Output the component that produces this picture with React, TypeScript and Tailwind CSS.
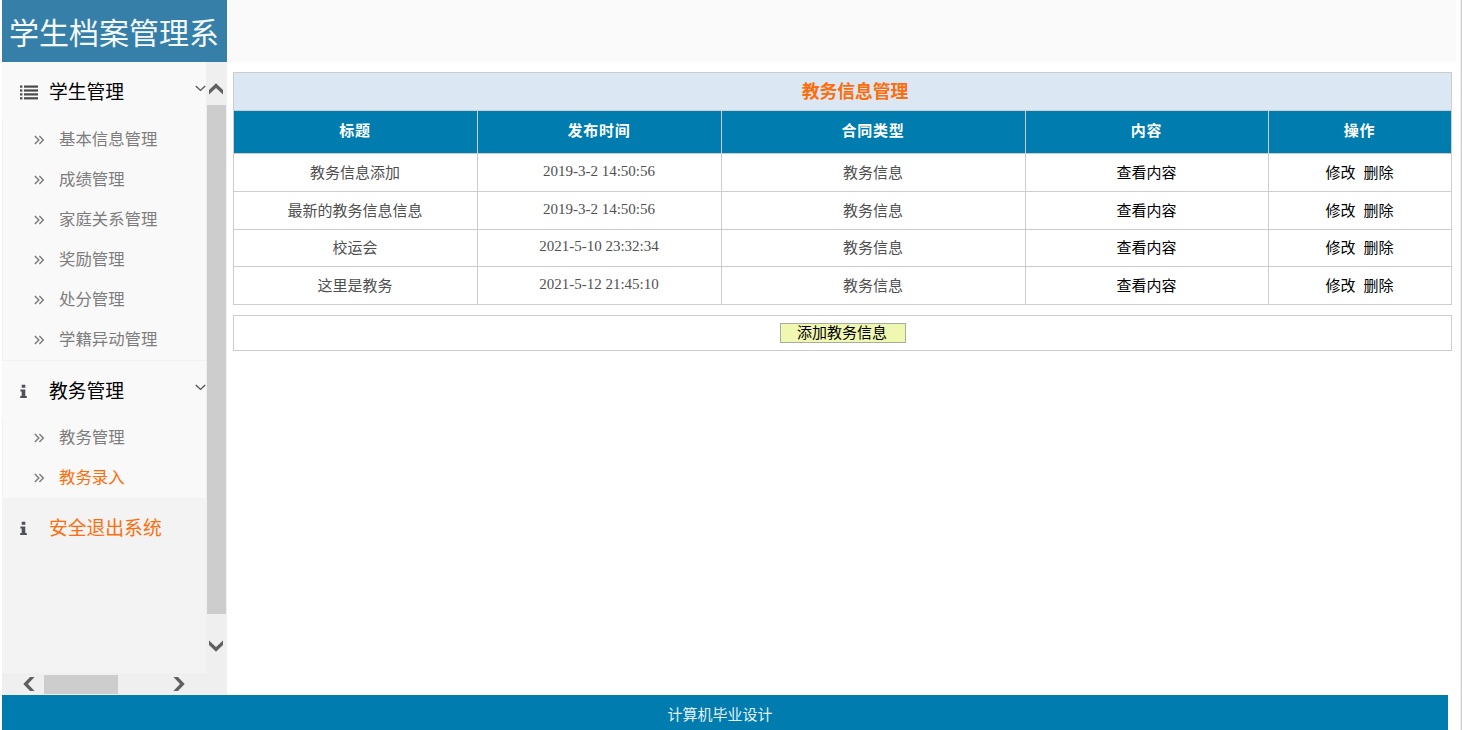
import React from "react";

function ListIcon() {
  return (
    <svg width="18" height="15" viewBox="0 0 18 15" fill="#4a4a4a" className="shrink-0">
      {[0.5, 4.4, 8.3, 12.2].map((y) => (
        <g key={y}>
          <rect x="0" y={y} width="2.4" height="2.2" />
          <rect x="4" y={y} width="14" height="2.2" />
        </g>
      ))}
    </svg>
  );
}

function InfoIcon() {
  return (
    <svg width="7" height="15" viewBox="0 0 7 15" fill="#50505a" className="shrink-0">
      <path d="M1.700.8h3.600v3H1.700zM.4 5.400H5.300v6.500h1.500V14H.2v-2.100h1.500V7.500H.4z" />
    </svg>
  );
}

function DoubleAngle() {
  return (
    <svg width="11" height="10" viewBox="0 0 11 10" fill="none" stroke="#7d7d7d" strokeWidth="1.5" className="shrink-0">
      <path d="M.9 1 4.800 5 .9 9M5.400 1 9.300 5 5.400 9" />
    </svg>
  );
}

function Chevron() {
  return (
    <svg width="11" height="7" viewBox="0 0 11 7" fill="none" stroke="#555" strokeWidth="1.4">
      <path d="M.8.9 5.500 5.400 10.200.9" />
    </svg>
  );
}

const rotations = { up: "", down: "rotate-180", left: "-rotate-90", right: "rotate-90" };

function ScrollArrow({ dir }: { dir: keyof typeof rotations }) {
  return (
    <svg width="14" height="12" viewBox="0 0 14 12" fill="#606060" className={rotations[dir]}>
      <path d="M7 .3 14 7v4.600L7 5 0 11.600V7z" />
    </svg>
  );
}

function MenuHead({ icon, label, open = true }: { icon: React.ReactNode; label: string; open?: boolean }) {
  return (
    <div className="flex h-[60px] items-center pl-[18px]">
      <span className="flex w-[29px]">{icon}</span>
      <span className={open ? "pb-px text-[18.8px] text-black" : "pb-px text-[18.8px] text-[#ff6c0a]"}>{label}</span>
      {open && (
        <span className="mb-[8px] ml-auto">
          <Chevron />
        </span>
      )}
    </div>
  );
}

function SubItem({ label, active = false }: { label: string; active?: boolean }) {
  return (
    <div className="flex h-10 items-center border-l border-[#f0f0f0] pl-[31px]">
      <DoubleAngle />
      <span
        className={
          active
            ? "ml-[14px] pb-[3px] text-[16.4px] text-[#ff6c0a]"
            : "ml-[14px] pb-[3px] text-[16.4px] text-[#7d7d7d]"
        }
      >
        {label}
      </span>
    </div>
  );
}

const studentItems = ["基本信息管理", "成绩管理", "家庭关系管理", "奖励管理", "处分管理", "学籍异动管理"];

function Sidebar() {
  return (
    <aside className="flex w-[225px] shrink-0 flex-col bg-[#efefef]">
      <h1 className="flex h-[62px] shrink-0 items-center overflow-hidden whitespace-nowrap bg-[#367fa9] pb-px pl-[7px] text-[30px] font-normal text-[#f4f9fc]">
        学生档案管理系
      </h1>
      <div className="flex h-[611px]">
        <nav className="w-[204px] whitespace-nowrap bg-[#f3f3f3]">
          <div className="h-[299px] border-b border-[#f2f2f2] bg-[#f9f9f9]">
            <div className="h-[58px]">
              <MenuHead icon={<ListIcon />} label="学生管理" />
            </div>
            {studentItems.map((label) => (
              <SubItem key={label} label={label} />
            ))}
          </div>
          <div className="h-[137px] bg-[#f9f9f9]">
            <div className="h-[57px]">
              <MenuHead icon={<InfoIcon />} label="教务管理" />
            </div>
            <SubItem label="教务管理" />
            <SubItem label="教务录入" active />
          </div>
          <MenuHead icon={<InfoIcon />} label="安全退出系统" open={false} />
        </nav>
        <div className="flex flex-1 flex-col items-center">
          <span className="flex h-[43px] items-end pb-[10px] pr-px">
            <ScrollArrow dir="up" />
          </span>
          <span className="h-[509px] w-[19px] bg-[#cdcdcd]" />
          <span className="mt-[26px] pr-px">
            <ScrollArrow dir="down" />
          </span>
        </div>
      </div>
      <div className="flex h-[22px] items-center pl-[20px]">
        <ScrollArrow dir="left" />
        <span className="ml-[8px] h-[19px] w-[74px] bg-[#cdcdcd]" />
        <span className="ml-[54px]">
          <ScrollArrow dir="right" />
        </span>
      </div>
    </aside>
  );
}

const headers = ["标题", "发布时间", "合同类型", "内容", "操作"];
const rows = [
  { title: "教务信息添加", time: "2019-3-2 14:50:56", height: "h-[38px]" },
  { title: "最新的教务信息信息", time: "2019-3-2 14:50:56", height: "h-[38px]" },
  { title: "校运会", time: "2021-5-10 23:32:34", height: "h-[37px]" },
  { title: "这里是教务", time: "2021-5-12 21:45:10", height: "h-[38px]" },
];
const columns = "grid grid-cols-[244px_244px_304px_243px_182px] border-t border-[#cdcdcd]";
const cell = "flex items-center justify-center border-r border-[#cdcdcd] pb-[3px] pr-px last:border-r-0";

function NoticeTable() {
  return (
    <section className="h-[233px] w-[1219px] border border-t-0 border-[#cdcdcd] text-[15px] text-[#505050]">
      <h2 className="flex h-[38px] items-center justify-center border-t border-[#cdcdcd] bg-[#dbe7f3] pb-[2px] pl-[25px] text-[17.8px] font-bold text-[#ff6c0a]">
        教务信息管理
      </h2>
      <div className={`${columns} h-[43px] bg-[#007cae] pb-px font-bold tracking-[0.7px] text-white`}>
        {headers.map((label) => (
          <div key={label} className={`${cell} -mb-px`}>
            <span className="pb-[2px]">{label}</span>
          </div>
        ))}
      </div>
      {rows.map((row) => (
        <div key={row.title} className={`${columns} ${row.height}`}>
          <div className={cell}>{row.title}</div>
          <div className={cell}>
            <span className="font-['Liberation_Serif',serif] text-[15px]">{row.time}</span>
          </div>
          <div className={cell}>教务信息</div>
          <div className={cell}>
            <a className="text-black">查看内容</a>
          </div>
          <div className={`${cell} gap-[8px] text-black`}>
            <a>修改</a>
            <a>删除</a>
          </div>
        </div>
      ))}
    </section>
  );
}

export default function App() {
  return (
    <div className="flex h-[730px] w-[1462px] flex-col overflow-hidden bg-white pl-[2px] font-['Noto_Sans_CJK_SC',sans-serif] leading-none">
      <div className="flex h-[695px] w-[1460px] border-r border-[#d0d0d0]">
        <Sidebar />
        <main className="flex flex-1 flex-col border-r border-[#ececec]">
          <div className="h-[62px] w-[1229px] bg-[#fafafa]" />
          <div className="flex flex-col gap-[10px] pl-[6px] pt-[10px]">
            <NoticeTable />
            <div className="flex h-[36px] w-[1219px] items-center justify-center border border-[#cdcdcd]">
              <button className="flex h-[20px] w-[126px] items-center justify-center border border-[#a8ada0] bg-[#f0f7b0] pb-[3px] pr-px text-[15px] leading-none text-black">
                添加教务信息
              </button>
            </div>
          </div>
        </main>
      </div>
      <footer className="flex h-[35px] w-[1460px] justify-between border-r border-[#d0d0d0]">
        <div className="flex w-[1446px] items-center justify-center bg-[#007cae] pr-[10px] pt-px text-[15px] text-[#e4f1f7]">
          计算机毕业设计
        </div>
        <div className="w-px bg-[#ececec]" />
      </footer>
    </div>
  );
}
